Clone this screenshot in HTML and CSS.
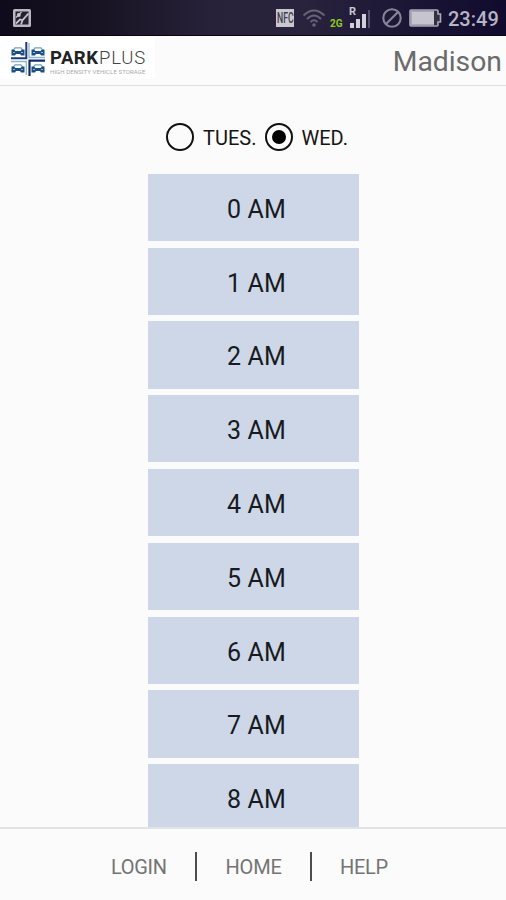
FILE: index.html
```html
<!DOCTYPE html>
<html>
	<head>
		<meta charset="UTF-8">
		<title>ParkPlus</title>
		<link rel="stylesheet" href="styles.css">
	</head>
	
	<body>
		<div class="statusBar">
			<svg class="picture" width="20" height="20" viewBox="0 0 20 20">
				<rect x="1" y="1" width="18" height="18" rx="1.500" fill="#b9b8c2"/>
				<rect x="3.500" y="3.500" width="13" height="13" fill="#252130"/>
				<path d="M4 15.500 L8 11.500 L10.500 12.200 L16.500 5.500 M10.500 12.200 L9 16.500" fill="none" stroke="#c5c4cc" stroke-width="1.800"/>
				<path d="M4 9.500 L9.500 4" stroke="#c5c4cc" stroke-width="1.200"/>
				<circle cx="6.800" cy="7" r="2" fill="#c5c4cc"/>
			</svg>
			<span class="nfc"><b>NFC</b></span>
			<svg class="wifi" width="24" height="20" viewBox="0 0 24 20">
				<g fill="none" stroke="#67647a" stroke-width="2">
					<path d="M1.500 7.500 Q12 -2.500 22.500 7.500"/>
					<path d="M5 11 Q12 4 19 11"/>
					<path d="M8.500 14 Q12 10.500 15.500 14"/>
				</g>
				<circle cx="12" cy="17" r="1.800" fill="#67647a"/>
			</svg>
			<span class="net">2G</span>
			<div class="signal">
				<span class="roam">R</span>
				<i class="bar b1"></i>
				<i class="bar b2"></i>
				<i class="bar b3"></i>
				<i class="bar b4"></i>
			</div>
			<svg class="mute" width="20" height="20" viewBox="0 0 20 20">
				<g fill="none" stroke="#87849a" stroke-width="2.1">
					<circle cx="10" cy="10" r="8.7"/>
					<path d="M4 16 L16 4"/>
				</g>
			</svg>
			<svg class="battery" width="33" height="18" viewBox="0 0 33 18">
				<path d="M2 1 H28 Q29 1 29 2 V5 H31.500 V13 H29 V16 Q29 17 28 17 H2 Q1 17 1 16 V2 Q1 1 2 1 Z" fill="#34303f" stroke="#aaa8b9" stroke-width="1.600"/>
				<rect x="1.500" y="1.500" width="23.500" height="15" fill="#aaa8b9"/>
				<rect x="3" y="3" width="22" height="12" fill="#c6c4ce"/>
			</svg>
			<span class="time">23:49</span>
		</div>
		
		<div class="header">
			<div class="logo">
				<svg width="36" height="36" viewBox="0 0 36 36">
					<defs>
						<g id="car">
							<path d="M2 3 L3.500 .8 H9.500 L11 3" fill="none" stroke="#6fa3b5" stroke-width="1.300"/>
							<path d="M0 2.500 H2.500 L4 4 H9 L10.500 2.500 H13 V8.500 H9.500 L8.500 7 H4.500 L3.500 8.500 H0 Z" fill="#1c4f80"/>
							<path d="M1.500 5.500 H3.500 M9.500 5.500 H11.500" stroke="#8cc4d0" stroke-width="1"/>
						</g>
					</defs>
					<!--四辆车，中间用十字隔开-->
					<use href="#car" x="1.500" y="6"/>
					<use href="#car" x="21.500" y="6"/>
					<use href="#car" x="1.500" y="23"/>
					<use href="#car" x="21.500" y="23"/>
					<path d="M16.300 1 V17.300 H1" fill="none" stroke="#1d3a78" stroke-width="2"/>
					<path d="M19 2 V16.500 H35" fill="none" stroke="#8fb5cc" stroke-width="1.300"/>
					<path d="M1 20.500 H16.300 V34" fill="none" stroke="#8fb5cc" stroke-width="1.300"/>
					<path d="M35 19.600 H19.500 V35" fill="none" stroke="#122d68" stroke-width="2.200"/>
				</svg>
				<div class="brand">
					<p class="name"><b>PARK</b><span>PLUS</span></p>
					<p class="slogan">HIGH DENSITY VEHICLE STORAGE</p>
				</div>
			</div>
			<h1>Madison</h1>
		</div>
		
		<div class="main">
			<ul class="dayList">
				<li><i></i><span>TUES.</span></li>
				<li class="current"><i></i><span>WED.</span></li>
			</ul>
			
			<ul class="timeList">
				<li>0 AM</li>
				<li>1 AM</li>
				<li>2 AM</li>
				<li>3 AM</li>
				<li>4 AM</li>
				<li>5 AM</li>
				<li>6 AM</li>
				<li>7 AM</li>
				<li>8 AM</li>
			</ul>
		</div>
		
		<div class="footer">
			<a class="login">LOGIN</a>
			<a class="home">HOME</a>
			<a class="help">HELP</a>
		</div>
	</body>
</html>
```

FILE: styles.css
```css
*{
	margin: 0;
	padding: 0;
	box-sizing: border-box;
}
ul,li{
	list-style: none;
}
i{
	display: block;
}
svg{
	display: block;
	flex: none;
}

html,body{
	height: 100%;
	overflow: hidden;
}

body{
	display: flex;
	flex-direction: column;
	font-family: Roboto, "Liberation Sans", sans-serif;
	background-color: #fbfbfb;
}

/* 状态栏 */
.statusBar{
	flex: none;
	display: flex;
	align-items: center;
	height: 36px;
	padding-left: 12px;
	background: linear-gradient(to right, #0f0b1c 0, #15111f 80px, #272139 210px, #29233d 300px, #1c1735 400px, #110b2e 100%);
	border-bottom: 1px solid #07050d;
}

.statusBar .nfc{
	display: flex;
	align-items: center;
	justify-content: center;
	width: 18px;
	height: 18px;
	margin-left: 244px;
	font-size: 14px;
	color: #403d4b;
	background-color: #c9c8cf;
}
.statusBar .nfc b{
	flex: none;
	font-weight: 500;
	transform: scaleX(.62);
}

.statusBar .wifi{
	margin-left: 8px;
}

.statusBar .net{
	width: 14px;
	margin: 12px 0 0 4px;
	font-size: 10px;
	font-weight: 700;
	line-height: 12px;
	color: #8fca25;
}

.statusBar .signal{
	display: flex;
	align-items: flex-end;
	gap: 2px;
	position: relative;
	width: 22px;
	height: 21px;
	margin: -1px 0 0 6px;
}
.statusBar .roam{
	position: absolute;
	left: -1px;
	top: -1px;
	font-size: 11px;
	font-weight: 700;
	line-height: 11px;
	color: #c9c8cf;
}
.statusBar .bar{
	width: 4px;
	background-color: #d2d1da;
}
.statusBar .b1{
	height: 5px;
}
.statusBar .b2{
	height: 9px;
}
.statusBar .b3{
	height: 14px;
}
.statusBar .b4{
	width: 2px;
	height: 18px;
	background-color: #54516a;
}

.statusBar .mute{
	margin-left: 10px;
}
.statusBar .battery{
	margin-left: 7px;
}
.statusBar .time{
	margin: 2px 0 0 6px;
	font-size: 20px;
	font-weight: 500;
	color: #b7b5c4;
}

/* 头部 */
.header{
	flex: none;
	display: flex;
	justify-content: space-between;
	height: 50px;
	padding-right: 4px;
	border-bottom: 1px solid #dedede;
}
.header .logo{
	display: flex;
	width: 155px;
	height: 43px;
	padding: 5px 0 0 10px;
	background-color: #fff;
}
.header .brand{
	padding: 6px 0 0 4px;
	white-space: nowrap;
}
.header .name{
	display: flex;
	font-size: 18.5px;
	line-height: 22px;
	color: #222;
}
.header .name b{
	width: 49px;
	font-weight: 700;
	letter-spacing: .5px;
}
.header .name span{
	font-weight: 300;
	letter-spacing: .8px;
	color: #444;
}
.header .slogan{
	font-size: 6px;
	line-height: 6px;
	letter-spacing: .1px;
	color: #aaa;
}
.header h1{
	font-size: 28.3px;
	font-weight: 400;
	line-height: 52px;
	color: #6b6b6b;
}

/* 内容 */
.main{
	flex: 1;
	min-height: 0;
	overflow: hidden;
}
.dayList{
	display: flex;
	align-items: center;
	height: 28px;
	margin: 37px 0 22.9px 166px;
	font-size: 20px;
	line-height: 28px;
	color: #151515;
}
.dayList li{
	display: flex;
	align-items: center;
	width: 98.5px;
}
.dayList span{
	padding-top: 2px;
}
.dayList i{
	flex: none;
	display: flex;
	align-items: center;
	justify-content: center;
	width: 28px;
	height: 28px;
	margin-right: 9px;
	border: 2.5px solid #111;
	border-radius: 50%;
}
.dayList .current i::after{
	content: "";
	width: 14px;
	height: 14px;
	border-radius: 50%;
	background-color: #000;
}

.timeList{
	display: flex;
	flex-direction: column;
	gap: 6.6px;
	width: 211px;
	margin-left: 148px;
}
.timeList li{
	flex: none;
	height: 67.2px;
	padding-left: 6px;
	font-size: 25px;
	line-height: 72px;
	letter-spacing: .2px;
	text-align: center;
	color: #171a20;
	background-color: #ced7e7;
}

/* 底部 */
.footer{
	flex: none;
	display: flex;
	align-items: center;
	height: 73px;
	padding: 3px 0 0 111px;
	border-top: 2px solid #e2e3e5;
}
.footer a{
	height: 29px;
	font-size: 20px;
	line-height: 30px;
	color: #747474;
}
.footer .login,.footer .home{
	border-right: 2px solid #4c4c4c;
}
.footer .login{
	width: 86px;
	letter-spacing: -.3px;
}
.footer .home{
	width: 115px;
	padding-left: 28.5px;
	letter-spacing: -.2px;
}
.footer .help{
	padding-left: 28px;
	letter-spacing: -.3px;
}
```
